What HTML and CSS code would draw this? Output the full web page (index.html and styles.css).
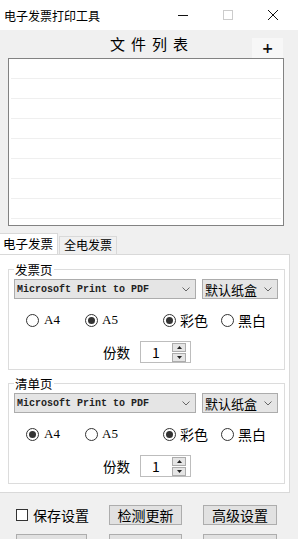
FILE: index.html
```html
<!DOCTYPE html>
<html>
<head>
  <meta charset="utf-8">
  <title>电子发票打印工具</title>
  <link rel="stylesheet" href="styles.css">
</head>
<body>
  <div class="titlebar">
    <span class="title">电子发票打印工具</span>
    <div class="winbtns">
      <span class="winbtn"><svg width="12" height="12" viewBox="0 0 12 12"><path d="M1 6.5h10" stroke="#111" stroke-width="1"/></svg></span>
      <span class="winbtn"><svg width="12" height="12" viewBox="0 0 12 12"><rect x="1.5" y="1.5" width="9" height="9" fill="none" stroke="#ccc"/></svg></span>
      <span class="winbtn"><svg width="12" height="12" viewBox="0 0 12 12"><path d="M1 1l10 10M11 1L1 11" stroke="#111" stroke-width="1"/></svg></span>
    </div>
  </div>

  <div class="files">
    <div class="files-head">
      <span></span>
      <span class="files-title">文件列表</span>
      <button class="add">+</button>
    </div>
    <div class="filelist">
      <div class="row"></div>
      <div class="row"></div>
      <div class="row"></div>
      <div class="row"></div>
      <div class="row"></div>
      <div class="row"></div>
      <div class="row"></div>
      <div class="row"></div>
    </div>
  </div>

  <div class="tabs">
    <span class="tab active">电子发票</span>
    <span class="tab">全电发票</span>
  </div>

  <div class="panel">
    <fieldset class="group">
      <legend>发票页</legend>
      <div class="combos">
        <div class="combo printer">Microsoft Print to PDF<svg width="8" height="5" viewBox="0 0 8 5"><path d="M0.5 0.5l3.5 3.5 3.5-3.5" fill="none" stroke="#666"/></svg></div>
        <div class="combo tray">默认纸盒<svg width="8" height="5" viewBox="0 0 8 5"><path d="M0.5 0.5l3.5 3.5 3.5-3.5" fill="none" stroke="#666"/></svg></div>
      </div>
      <div class="radios">
        <label class="opt size1"><span class="radio"></span><span class="latin">A4</span></label>
        <label class="opt size2"><span class="radio on"></span><span class="latin">A5</span></label>
        <label class="opt color1"><span class="radio on"></span>彩色</label>
        <label class="opt"><span class="radio"></span>黑白</label>
      </div>
      <div class="copies">
        <span class="copies-label">份数</span>
        <div class="spin">
          <span class="spin-value">1</span>
          <span class="spin-btns">
            <span class="spin-btn"><svg width="5" height="3" viewBox="0 0 5 3"><path d="M2.5 0L5 3H0z" fill="#222"/></svg></span>
            <span class="spin-btn"><svg width="5" height="3" viewBox="0 0 5 3"><path d="M0 0h5L2.5 3z" fill="#222"/></svg></span>
          </span>
        </div>
      </div>
    </fieldset>

    <fieldset class="group second">
      <legend>清单页</legend>
      <div class="combos">
        <div class="combo printer">Microsoft Print to PDF<svg width="8" height="5" viewBox="0 0 8 5"><path d="M0.5 0.5l3.5 3.5 3.5-3.5" fill="none" stroke="#666"/></svg></div>
        <div class="combo tray">默认纸盒<svg width="8" height="5" viewBox="0 0 8 5"><path d="M0.5 0.5l3.5 3.5 3.5-3.5" fill="none" stroke="#666"/></svg></div>
      </div>
      <div class="radios">
        <label class="opt size1"><span class="radio on"></span><span class="latin">A4</span></label>
        <label class="opt size2"><span class="radio"></span><span class="latin">A5</span></label>
        <label class="opt color1"><span class="radio on"></span>彩色</label>
        <label class="opt"><span class="radio"></span>黑白</label>
      </div>
      <div class="copies">
        <span class="copies-label">份数</span>
        <div class="spin">
          <span class="spin-value">1</span>
          <span class="spin-btns">
            <span class="spin-btn"><svg width="5" height="3" viewBox="0 0 5 3"><path d="M2.5 0L5 3H0z" fill="#222"/></svg></span>
            <span class="spin-btn"><svg width="5" height="3" viewBox="0 0 5 3"><path d="M0 0h5L2.5 3z" fill="#222"/></svg></span>
          </span>
        </div>
      </div>
    </fieldset>
  </div>

  <div class="footer">
    <div class="footer-row">
      <label class="save"><span class="checkbox"></span>保存设置</label>
      <button class="btn">检测更新</button>
      <button class="btn wide">高级设置</button>
    </div>
    <div class="footer-row">
      <button class="btn first">&nbsp;</button>
      <button class="btn">&nbsp;</button>
      <button class="btn wide">&nbsp;</button>
    </div>
  </div>
</body>
</html>
```

FILE: styles.css
```css
html, body {
  margin: 0;
  padding: 0;
}

body {
  width: 298px;
  height: 539px;
  overflow: hidden;
  background: #f0f0f0;
  font-family: "Noto Sans CJK SC", sans-serif;
  color: #000;
}

/* window title */
.titlebar {
  height: 30px;
  background: #fff;
  display: flex;
  align-items: center;
  justify-content: space-between;
}

.title {
  font-size: 12px;
  padding-left: 4px;
}

.winbtns {
  display: flex;
  margin-right: 3px;
}

.winbtn {
  width: 45px;
  height: 30px;
  display: flex;
  align-items: center;
  justify-content: center;
}

/* file list */
.files {
  height: 198px;
}

.files-head {
  height: 28px;
  display: grid;
  grid-template-columns: 1fr auto 1fr;
  align-items: end;
}

.files-title {
  font-size: 15px;
  letter-spacing: 6px;
  margin-right: -6px;
  line-height: 20px;
  padding-bottom: 4px;
}

.add {
  justify-self: end;
  width: 31px;
  height: 20px;
  margin-right: 15px;
  padding: 0;
  border: none;
  background: #f7f7f7;
  font-family: "DejaVu Sans", sans-serif;
  font-size: 14px;
  font-weight: bold;
  line-height: 20px;
  color: #111;
}

.filelist {
  margin: 0 14px 0 8px;
  height: 168px;
  box-sizing: border-box;
  background: #fff;
  border: 1px solid #828282;
  overflow: hidden;
}

.row {
  height: 20px;
  box-sizing: border-box;
  border-bottom: 1px solid #efefef;
  margin: 0 2px;
}

/* tabs */
.tabs {
  height: 26px;
  display: flex;
  align-items: flex-end;
}

.tab {
  font-size: 12px;
  height: 17px;
  line-height: 16px;
  padding: 0 4px;
  width: 48px;
  background: #f0f0f0;
  border: 1px solid #d9d9d9;
  border-bottom: none;
  margin-left: 1px;
}

.tab.active {
  background: #fff;
  height: 20px;
  line-height: 20px;
  font-size: 12.5px;
  padding: 0 3px;
  width: 51px;
  border-left: none;
  margin-left: 0;
}

/* tab page */
.panel {
  width: 290px;
  box-sizing: border-box;
  background: #fff;
  border: 1px solid #d9d9d9;
  border-left: none;
  padding: 6px 0 8px;
}

.group {
  margin: 0 4px 0 8px;
  padding: 1px 5px 6px;
  border: 1px solid #dcdcdc;
  min-width: 0;
}

.group.second {
  margin-top: 5px;
}

.group legend {
  font-size: 12.5px;
  line-height: 17px;
  padding: 0 1px;
}

.combos {
  display: flex;
  gap: 6px;
}

.combo {
  height: 20px;
  box-sizing: border-box;
  border: 1px solid #acacac;
  background: #e5e5e5;
  display: flex;
  align-items: center;
  justify-content: space-between;
  padding: 0 5px 0 2px;
}

.printer {
  width: 182px;
  font-family: "Liberation Mono", monospace;
  font-size: 10px;
  font-weight: bold;
  color: #222;
}

.tray {
  width: 76px;
  font-size: 13px;
}

.radios {
  margin-top: 11px;
  height: 20px;
  padding-left: 12px;
  display: flex;
  align-items: center;
  font-size: 14px;
}

.opt {
  display: flex;
  align-items: center;
  gap: 4px;
}

.size1 { width: 59px; gap: 5px; }
.size2 { width: 78px; gap: 4px; }
.color1 { width: 58px; }

.latin {
  font-family: "Liberation Serif", serif;
  font-size: 13px;
}

.radio {
  width: 13px;
  height: 13px;
  box-sizing: border-box;
  border: 1px solid #333;
  border-radius: 50%;
  background: #fff;
  display: flex;
  align-items: center;
  justify-content: center;
}

.radio.on::after {
  content: "";
  width: 7px;
  height: 7px;
  border-radius: 50%;
  background: #333;
}

.copies {
  margin-top: 11px;
  padding-left: 89px;
  display: flex;
  align-items: center;
  gap: 10px;
}

.copies-label {
  font-size: 13.5px;
}

.spin {
  width: 51px;
  height: 22px;
  box-sizing: border-box;
  border: 1px solid #bdbdbd;
  display: flex;
  align-items: center;
  justify-content: space-between;
  padding: 0 4px 0 11px;
}

.spin-value {
  font-size: 14px;
}

.spin-btns {
  display: flex;
  flex-direction: column;
  gap: 1px;
}

.spin-btn {
  width: 12px;
  height: 7px;
  border: 1px solid #acacac;
  background: #e5e5e5;
  display: flex;
  align-items: center;
  justify-content: center;
}

/* bottom bar */
.footer {
  padding: 12px 0 0 16px;
}

.footer-row {
  display: flex;
  align-items: center;
  margin-bottom: 9px;
}

.save {
  width: 93px;
  display: flex;
  align-items: center;
  gap: 5px;
  font-size: 14px;
}

.checkbox {
  width: 12px;
  height: 12px;
  box-sizing: border-box;
  border: 1px solid #333;
  background: #fff;
}

.btn {
  width: 73px;
  height: 20px;
  padding: 0;
  border: 1px solid #adadad;
  background: #e1e1e1;
  font-family: "Noto Sans CJK SC", sans-serif;
  font-size: 14px;
  line-height: 18px;
  color: #000;
}

.btn.wide {
  width: 74px;
  margin-left: 21px;
}

.btn.first {
  width: 71px;
  margin-right: 22px;
}
```
